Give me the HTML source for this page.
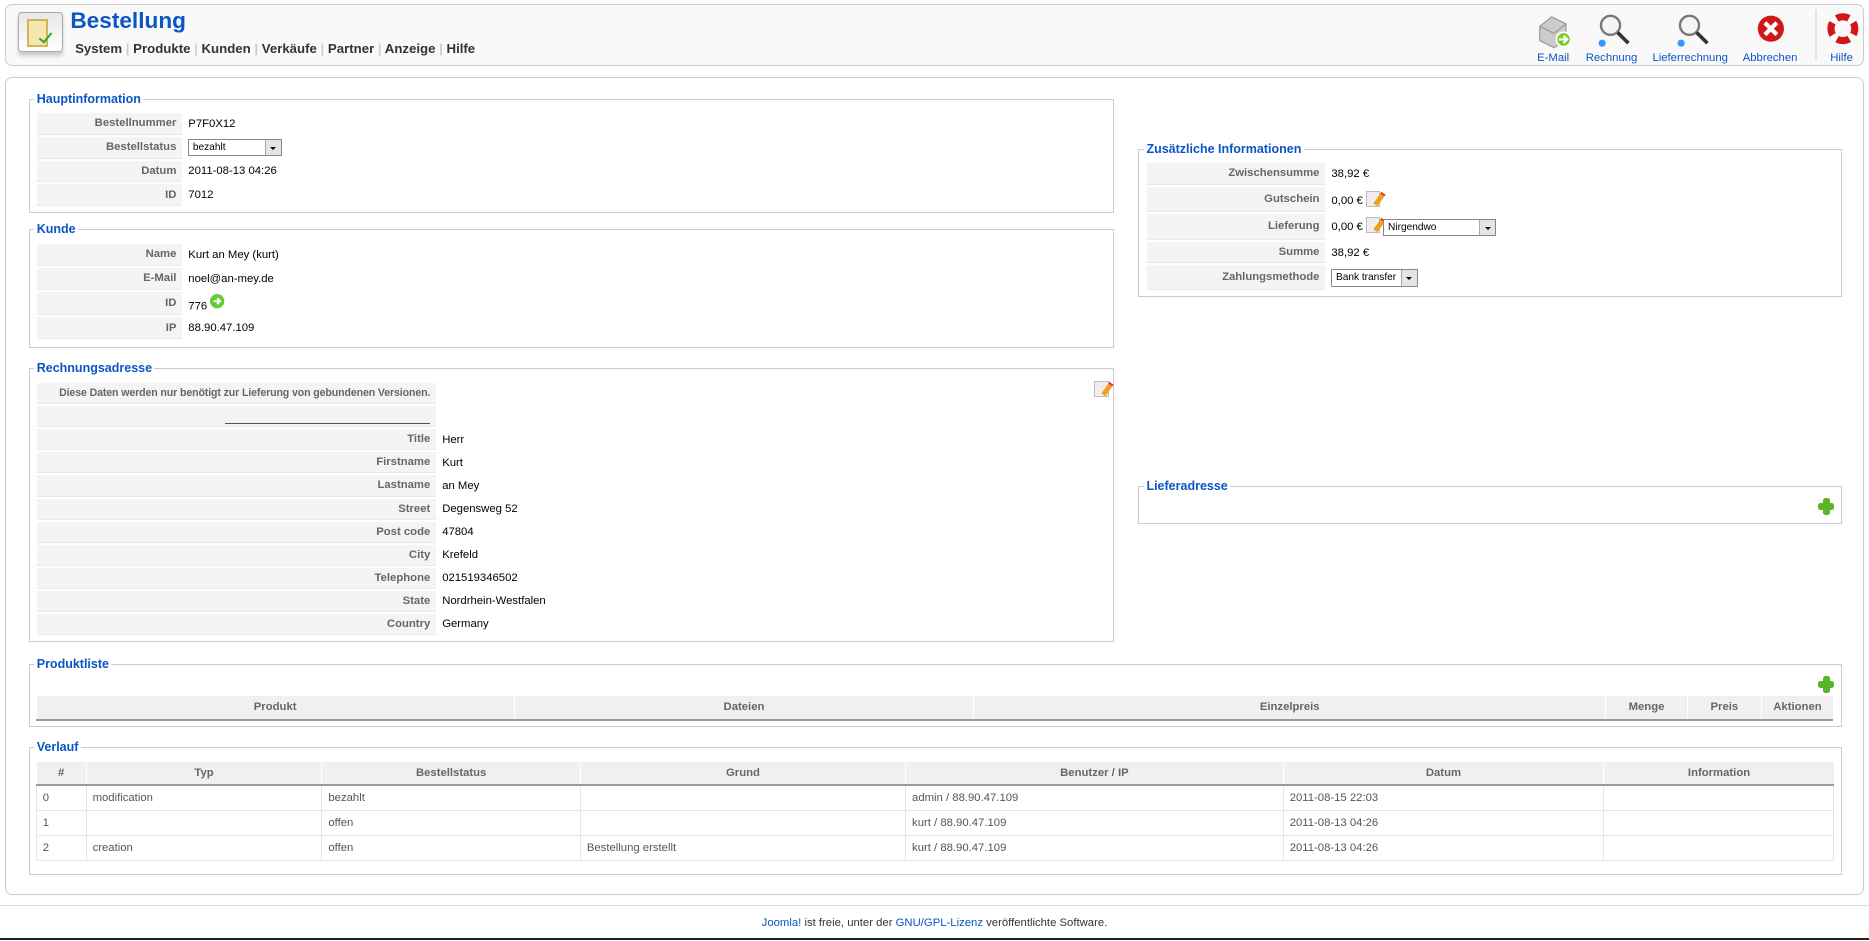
<!DOCTYPE html>
<html><head><meta charset="utf-8"><style>
html{zoom:1.19196}
body{margin:0;width:1568px;height:789px;position:relative;background:#fff;font-family:"Liberation Sans",Arial,sans-serif;font-size:10px;color:#333;overflow:hidden}
.abs{position:absolute}
.box{position:absolute;border:1px solid #ccc;border-radius:6px;background:#fff}
.fs{position:absolute;border:1px solid #ccc;box-sizing:border-box}
.lg{position:absolute;top:-7px;left:4px;background:#fff;padding:0 2px;color:#0b55c4;font-weight:bold;font-size:10.5px;line-height:13px}
table.kv{position:absolute;border-collapse:separate;border-spacing:0 2px;font-size:9.5px}
table.kv td{height:17.5px;padding:0;color:#000;white-space:nowrap}
table.kv td.k{background:#f4f4f4;color:#666;font-weight:bold;text-align:right;padding-right:5px;border-bottom:1px solid #e9e9e9}
table.kv td.v{padding-left:5px}
table.kv.r td{height:16.8px}
.sel{display:inline-block;vertical-align:middle;height:13px;border:1px solid #888;background:#fff;position:relative;font-size:8.5px;line-height:13px;padding-left:3px;box-sizing:content-box}
.sel i{position:absolute;right:0;top:0;width:13px;height:13px;background:#e4e4e4;border-left:1px solid #aaa}
.sel i:after{content:"";position:absolute;left:4px;top:6px;border:3px solid transparent;border-top:3px solid #000}
table.gr{position:absolute;border-collapse:collapse;font-size:9.5px}
table.gr th{background:#f0f0f0;color:#666;font-weight:bold;height:19px;border-bottom:2px solid #999;border-left:1px solid #fff;padding:0}
table.gr td{height:20px;border:1px solid #e5e5e5;padding:0 0 0 5px;color:#555}
.tb{position:absolute;top:44px;font-size:9.5px;color:#0b55c4;text-align:center;width:80px;margin-left:-40px}
.edit{display:inline-block;width:12px;height:13px;vertical-align:-2px;position:relative;background:#eee;border:1px solid #bbb;box-sizing:border-box}
.edit:after{content:"";position:absolute;right:-2px;top:0;width:4px;height:10px;background:#f0a020;transform:rotate(35deg);border-top:2px solid #e33}
.plus{position:absolute;width:14px;height:14px}
.plus:before,.plus:after{content:"";position:absolute;background:#5ab52a;border-radius:2px}
.plus:before{left:4px;top:0;width:6px;height:14px}
.plus:after{left:0;top:4px;width:14px;height:6px}
</style></head><body>

<div class="box" style="left:4px;top:3px;width:1558px;height:51px;background:#f9f9f9"></div>
<div class="abs" style="left:15px;top:10px;width:36px;height:32px;border:1px solid #aaa;border-radius:3px;background:linear-gradient(#e8e8e8,#fff);box-shadow:0 3px 3px #ccc"></div>
<div class="abs" style="left:23px;top:16px;width:14px;height:20px;background:#f4e7b0;border:2px solid #d4b35a"></div>
<div class="abs" style="left:33px;top:28px;width:9px;height:4px;border-left:2px solid #3a3;border-bottom:2px solid #3a3;transform:rotate(-50deg)"></div>
<div class="abs" style="left:59px;top:7px;font-size:19px;font-weight:bold;color:#0b55c4">Bestellung</div>
<div class="abs" style="left:63px;top:34px;font-size:11.1px;font-weight:bold;color:#333">System <span style="color:#ccc">|</span> Produkte <span style="color:#ccc">|</span> Kunden <span style="color:#ccc">|</span> Verkäufe <span style="color:#ccc">|</span> Partner <span style="color:#ccc">|</span> Anzeige <span style="color:#ccc">|</span> Hilfe</div>

<svg class="abs" style="left:1288px;top:10px" width="32" height="32" viewBox="0 0 32 32"><path d="M4 12 L14 4 L26 10 L26 24 L16 30 L4 24Z" fill="#ccc" stroke="#999"/><path d="M4 12 L16 18 L26 10" fill="none" stroke="#999"/><circle cx="24" cy="23" r="6" fill="#7c2" stroke="#fff" stroke-width="1.5"/><path d="M20 23h6M24 20l3 3-3 3" stroke="#fff" stroke-width="1.8" fill="none"/></svg>
<div class="tb" style="left:1303px">E-Mail</div>
<svg class="abs" style="left:1338px;top:9px" width="32" height="32" viewBox="0 0 32 32"><circle cx="13" cy="12" r="8" fill="#f4f4f4" stroke="#777" stroke-width="2"/><path d="M19 18 L28 27" stroke="#333" stroke-width="3"/><circle cx="6" cy="27" r="3" fill="#39f"/></svg>
<div class="tb" style="left:1352px">Rechnung</div>
<svg class="abs" style="left:1404px;top:9px" width="32" height="32" viewBox="0 0 32 32"><circle cx="13" cy="12" r="8" fill="#f4f4f4" stroke="#777" stroke-width="2"/><path d="M19 18 L28 27" stroke="#333" stroke-width="3"/><circle cx="6" cy="27" r="3" fill="#39f"/></svg>
<div class="tb" style="left:1418px">Lieferrechnung</div>
<svg class="abs" style="left:1471px;top:10px" width="30" height="30" viewBox="0 0 30 30"><circle cx="15" cy="14" r="11" fill="#d01818"/><path d="M10 9l10 10M20 9L10 19" stroke="#fff" stroke-width="3.5"/></svg>
<div class="tb" style="left:1485px">Abbrechen</div>
<div class="abs" style="left:1523px;top:8px;width:1px;height:42px;background:#e4e4e4"></div>
<svg class="abs" style="left:1531px;top:10px" width="30" height="30" viewBox="0 0 30 30"><circle cx="15" cy="14" r="10" fill="none" stroke="#d01818" stroke-width="6"/><circle cx="15" cy="14" r="10" fill="none" stroke="#fff" stroke-width="6" stroke-dasharray="5 10.7" stroke-dashoffset="-5"/></svg>
<div class="tb" style="left:1545px">Hilfe</div>

<div class="box" style="left:4px;top:65px;width:1558px;height:684px"></div>

<div class="fs" style="left:24px;top:83px;width:911px;height:96px"><div class="lg">Hauptinformation</div></div>
<table class="kv" style="left:31px;top:93px">
<tr><td class="k" style="width:117px">Bestellnummer</td><td class="v">P7F0X12</td></tr>
<tr><td class="k">Bestellstatus</td><td class="v"><span class="sel" style="width:74px">bezahlt<i></i></span></td></tr>
<tr><td class="k">Datum</td><td class="v">2011-08-13 04:26</td></tr>
<tr><td class="k">ID</td><td class="v">7012</td></tr>
</table>

<div class="fs" style="left:24px;top:192px;width:911px;height:100px"><div class="lg">Kunde</div></div>
<table class="kv" style="left:31px;top:203px">
<tr><td class="k" style="width:117px">Name</td><td class="v">Kurt an Mey (kurt)</td></tr>
<tr><td class="k">E-Mail</td><td class="v">noel@an-mey.de</td></tr>
<tr><td class="k" style="height:19px">ID</td><td class="v">776 <svg width="12" height="12" style="vertical-align:1px" viewBox="0 0 12 12"><circle cx="6" cy="6" r="6" fill="#6c3"/><path d="M3 6h5M6 3.5l2.5 2.5L6 8.5" stroke="#fff" stroke-width="1.6" fill="none"/></svg></td></tr>
<tr><td class="k">IP</td><td class="v">88.90.47.109</td></tr>
</table>

<div class="fs" style="left:24px;top:309px;width:911px;height:230px"><div class="lg">Rechnungsadresse</div></div>
<div class="edit abs" style="left:918px;top:320px"></div>
<table class="kv r" style="left:31px;top:320px">
<tr><td class="k" style="width:330px;font-size:8.9px;letter-spacing:-0.1px">Diese Daten werden nur benötigt zur Lieferung von gebundenen Versionen.</td><td class="v"></td></tr>
<tr><td class="k"><div style="margin-left:158px;border-bottom:1px solid #555;height:11px"></div></td><td class="v"></td></tr>
<tr><td class="k">Title</td><td class="v">Herr</td></tr>
<tr><td class="k">Firstname</td><td class="v">Kurt</td></tr>
<tr><td class="k">Lastname</td><td class="v">an Mey</td></tr>
<tr><td class="k">Street</td><td class="v">Degensweg 52</td></tr>
<tr><td class="k">Post code</td><td class="v">47804</td></tr>
<tr><td class="k">City</td><td class="v">Krefeld</td></tr>
<tr><td class="k">Telephone</td><td class="v">021519346502</td></tr>
<tr><td class="k">State</td><td class="v">Nordrhein-Westfalen</td></tr>
<tr><td class="k">Country</td><td class="v">Germany</td></tr>
</table>

<div class="fs" style="left:955px;top:125px;width:590px;height:124px"><div class="lg">Zusätzliche Informationen</div></div>
<table class="kv" style="left:962px;top:135px">
<tr><td class="k" style="width:145px">Zwischensumme</td><td class="v">38,92 €</td></tr>
<tr><td class="k" style="height:20px">Gutschein</td><td class="v">0,00 € <span class="edit"></span></td></tr>
<tr><td class="k" style="height:21px">Lieferung</td><td class="v">0,00 € <span class="edit"></span> <span class="sel" style="width:90px">Nirgendwo<i></i></span></td></tr>
<tr><td class="k">Summe</td><td class="v">38,92 €</td></tr>
<tr><td class="k" style="height:20px">Zahlungsmethode</td><td class="v"><span class="sel" style="width:68px">Bank transfer<i></i></span></td></tr>
</table>

<div class="fs" style="left:955px;top:408px;width:590px;height:32px"><div class="lg">Lieferadresse</div></div>
<div class="plus" style="left:1525px;top:418px"></div>

<div class="fs" style="left:24px;top:557px;width:1521px;height:53px"><div class="lg">Produktliste</div></div>
<div class="plus" style="left:1525px;top:567px"></div>
<table class="gr" style="left:30px;top:584px;width:1508px">
<tr><th style="width:400px">Produkt</th><th style="width:385px">Dateien</th><th>Einzelpreis</th><th style="width:68px">Menge</th><th style="width:61px">Preis</th><th style="width:60px">Aktionen</th></tr>
</table>

<div class="fs" style="left:24px;top:627px;width:1521px;height:107px"><div class="lg">Verlauf</div></div>
<table class="gr" style="left:30px;top:639px;width:1509px">
<tr><th style="width:41px">#</th><th style="width:197px">Typ</th><th style="width:216px">Bestellstatus</th><th style="width:272px">Grund</th><th style="width:316px">Benutzer / IP</th><th style="width:268px">Datum</th><th>Information</th></tr>
<tr><td>0</td><td>modification</td><td>bezahlt</td><td></td><td>admin / 88.90.47.109</td><td>2011-08-15 22:03</td><td></td></tr>
<tr><td>1</td><td></td><td>offen</td><td></td><td>kurt / 88.90.47.109</td><td>2011-08-13 04:26</td><td></td></tr>
<tr><td>2</td><td>creation</td><td>offen</td><td>Bestellung erstellt</td><td>kurt / 88.90.47.109</td><td>2011-08-13 04:26</td><td></td></tr>
</table>

<div class="abs" style="left:0;top:759px;width:1568px;height:1px;background:#ddd"></div>
<div class="abs" style="left:0;top:769px;width:1568px;text-align:center;font-size:9.5px;color:#333"><span style="color:#0b55c4">Joomla!</span> ist freie, unter der <span style="color:#0b55c4">GNU/GPL-Lizenz</span> veröffentlichte Software.</div>
<div class="abs" style="left:0;top:787px;width:1568px;height:2px;background:#222"></div>
</body></html>
